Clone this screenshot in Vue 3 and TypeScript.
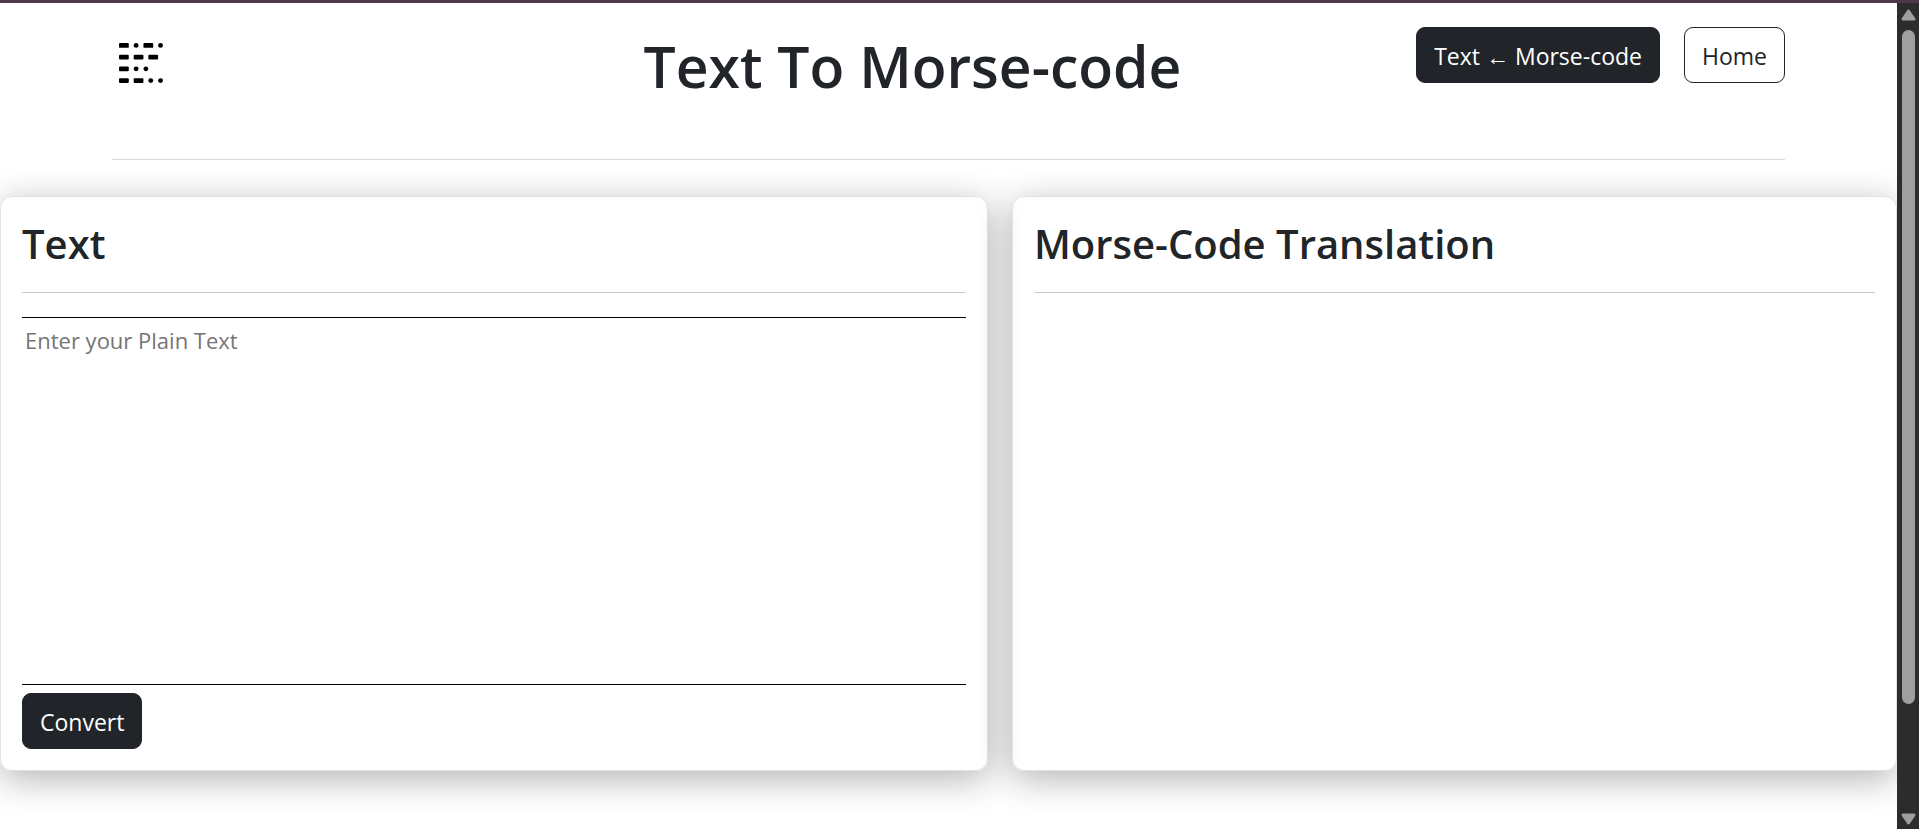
<script setup lang="ts">
import { ref } from 'vue'

interface Mark { x: number; y: number; w: number }

const rows = ['-.-.', '---', '-..', '--..']
const marks: Mark[] = rows.flatMap((row, r) => {
  let x = 1
  return [...row].map((c) => {
    const w = c === '-' ? 10 : 5
    const mark = { x, y: 1 + r * 12, w }
    x += c === '-' ? 15 : 10
    return mark
  })
})

const alphabet: Record<string, string> = {
  A: '.-', B: '-...', C: '-.-.', D: '-..', E: '.', F: '..-.', G: '--.', H: '....', I: '..',
  J: '.---', K: '-.-', L: '.-..', M: '--', N: '-.', O: '---', P: '.--.', Q: '--.-', R: '.-.',
  S: '...', T: '-', U: '..-', V: '...-', W: '.--', X: '-..-', Y: '-.--', Z: '--..',
  0: '-----', 1: '.----', 2: '..---', 3: '...--', 4: '....-', 5: '.....', 6: '-....',
  7: '--...', 8: '---..', 9: '----.', ' ': '/',
}

const plain = ref('')
const morse = ref('')

function convert() {
  morse.value = [...plain.value.toUpperCase()].map((c) => alphabet[c] ?? c).join(' ')
}
</script>

<template>
  <div class="window">
    <div class="page">
      <header class="header">
        <a class="logo" href="#" aria-label="Morse code">
          <svg width="46" height="42" viewBox="0 0 47 43">
            <rect v-for="(m, i) in marks" :key="i" :x="m.x" :y="m.y" :width="m.w" height="5" :rx="m.w > 5 ? 1 : 2.5" />
          </svg>
        </a>
        <h1 class="title">Text To Morse-code</h1>
        <nav class="nav">
          <a class="btn dark" href="#">Text ← Morse-code</a>
          <a class="btn outline" href="#">Home</a>
        </nav>
      </header>
      <main class="cards">
        <section class="card">
          <h2><label for="plain">Text</label></h2>
          <hr>
          <textarea id="plain" v-model="plain" placeholder="Enter your Plain Text"></textarea>
          <button class="btn dark" type="button" @click="convert">Convert</button>
        </section>
        <section class="card">
          <h2>Morse-Code Translation</h2>
          <hr>
          <output class="result" for="plain">{{ morse }}</output>
        </section>
      </main>
    </div>
    <div class="scrollbar" aria-hidden="true">
      <svg width="22" height="24" viewBox="0 0 22 24"><path d="M11.5 8 L17 16 H6 Z" /></svg>
      <div class="track"><div class="thumb"></div></div>
      <svg width="22" height="24" viewBox="0 0 22 24"><path d="M6 10 H17 L11.5 18 Z" /></svg>
    </div>
  </div>
</template>

<style>
body {
  margin: 0;
}
</style>

<style scoped>
* {
  box-sizing: border-box;
}
.window {
  display: flex;
  height: 100vh;
  border-top: 3px solid #4b394b;
  background: #fff;
  color: #212529;
  font: 400 22px/36px "Segoe UI", "Open Sans", "Noto Sans", sans-serif;
}
.page {
  flex: 1;
  min-width: 0;
  overflow: hidden;
}
.header {
  display: grid;
  grid-template-columns: 1fr auto 1fr;
  align-items: start;
  margin: 0 112px;
  padding: 24px 0 57px;
  border-bottom: 1px solid #dadbdc;
}
.logo {
  display: block;
  margin: 15px 0 0 6px;
}
.logo svg {
  display: block;
}
h1, h2 {
  margin: 0;
  font-weight: 600;
}
.title {
  margin: 3px 72px 0 0;
  font-size: 57px;
  line-height: 72px;
}
.nav {
  display: flex;
  align-items: flex-start;
  justify-content: flex-end;
  gap: 24px;
}
.btn {
  padding: 10px 17px 8px;
  border: 1px solid #212529;
  border-radius: 9px;
  font: inherit;
  font-size: 23px;
  text-decoration: none;
  white-space: nowrap;
}
.dark {
  background: #212529;
  color: #fff;
}
.outline {
  color: #212529;
}
.cards {
  display: flex;
  gap: 24px;
  margin-top: 36px;
}
.card {
  display: flex;
  flex-direction: column;
  align-items: flex-start;
  flex: 944;
  min-width: 0;
  padding: 21px;
  border: 1px solid #dee2e6;
  border-radius: 12px;
  box-shadow: 0 8px 36px rgba(0, 0, 0, 0.3);
}
.card + .card {
  flex-grow: 841;
}
h2 {
  font-size: 40px;
  line-height: 52px;
}
hr {
  width: 100%;
  margin: 22px 0 24px;
  border: 0;
  border-top: 1px solid #c7c8c9;
}
textarea {
  display: block;
  width: 100%;
  height: 368px;
  margin: 0 0 8px;
  padding: 4px 3px;
  border: solid #000;
  border-width: 1px 0;
  border-radius: 0;
  outline: 0;
  background: transparent;
  color: inherit;
  font: inherit;
  resize: none;
}
textarea::placeholder {
  color: #757575;
  opacity: 1;
}
.result {
  overflow-wrap: anywhere;
}
.scrollbar {
  display: flex;
  flex-direction: column;
  width: 22px;
  background: #2c2c2c;
}
.scrollbar svg {
  display: block;
  fill: #9f9f9f;
  stroke: #9f9f9f;
  stroke-width: 3px;
  stroke-linejoin: round;
}
.track {
  flex: 1;
  padding: 3px 4px 0 5px;
}
.thumb {
  height: 87%;
  border-radius: 7px;
  background: #9f9f9f;
}
</style>
